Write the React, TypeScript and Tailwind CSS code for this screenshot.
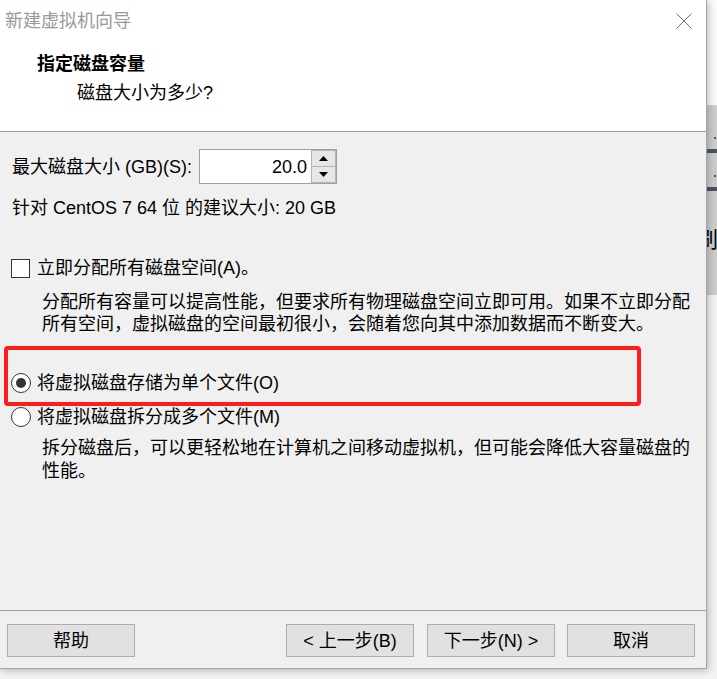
import React from "react";

function Btn({ children, className = "" }: { children: React.ReactNode; className?: string }) {
  return (
    <div
      className={
        "w-[128px] h-[33px] flex items-center justify-center bg-[#e1e1e1] border border-[#adadad] text-[18px] leading-[24px] text-black whitespace-nowrap " +
        className
      }
    >
      {children}
    </div>
  );
}

export default function App() {
  return (
    <div className="w-[717px] h-[679px] flex overflow-hidden bg-[#f4f4f4] font-[family-name:'Liberation_Sans','Noto_Sans_CJK_SC',sans-serif] text-black">
      <div className="w-[707px] flex flex-col shrink-0">
        <div className="relative z-10 h-[669px] flex flex-col bg-[#f0f0f0] border-r border-b border-[#a6a6a6] shadow-[1px_1px_8px_rgba(0,0,0,0.28)]">
          {/* header */}
          <div className="h-[132px] shrink-0 bg-white border-b border-[#a0a0a0] flex flex-col">
            <div className="h-[42px] flex items-center justify-between pl-[5px] pr-[14px]">
              <span className="text-[18px] leading-[24px] text-[#999999]">新建虚拟机向导</span>
              <svg width="16" height="16" viewBox="0 0 16 16" fill="none">
                <path d="M0.5 0.5L15.5 15.5M15.5 0.5L0.5 15.5" stroke="#6b6b6b" strokeWidth="1" />
              </svg>
            </div>
            <div className="pl-[37px] mt-[10px] text-[18px] leading-[24px] font-bold">指定磁盘容量</div>
            <div className="pl-[77px] mt-[5px] text-[18px] leading-[24px]">磁盘大小为多少?</div>
          </div>

          {/* body */}
          <div className="flex-1 flex flex-col text-[18px] leading-[24px]">
            <div className="mt-[17px] h-[35px] flex items-center pl-[12px]">
              <span className="w-[187px] whitespace-nowrap">最大磁盘大小 (GB)(S):</span>
              <div className="flex h-[35px] w-[138px] border border-[#a0a0a0] bg-white">
                <div className="flex-1 flex items-center justify-end pr-[4px]">20.0</div>
                <div className="w-[25px] flex flex-col">
                  <div className="h-[17px] flex items-center justify-center bg-[#e6e6e6] border border-[#b4b4b4]">
                    <svg width="9" height="5" viewBox="0 0 9 5">
                      <path d="M4.5 0L9 5H0Z" fill="#000" />
                    </svg>
                  </div>
                  <div className="flex-1 flex items-center justify-center bg-[#e6e6e6] border border-t-0 border-[#b4b4b4]">
                    <svg width="9" height="5" viewBox="0 0 9 5">
                      <path d="M0 0H9L4.5 5Z" fill="#000" />
                    </svg>
                  </div>
                </div>
              </div>
            </div>

            <div className="mt-[12px] pl-[12px] whitespace-nowrap">针对 CentOS 7 64 位 的建议大小: 20 GB</div>

            <div className="mt-[36px] h-[24px] flex items-center pl-[11px] gap-[7px]">
              <div className="w-[19px] h-[19px] bg-white border border-[#333333]" />
              <span className="whitespace-nowrap">立即分配所有磁盘空间(A)。</span>
            </div>

            <div className="mt-[11px] pl-[42px] leading-[22px] whitespace-nowrap">
              分配所有容量可以提高性能，但要求所有物理磁盘空间立即可用。如果不立即分配
              <br />
              所有空间，虚拟磁盘的空间最初很小，会随着您向其中添加数据而不断变大。
            </div>

            <div className="mt-[36px] h-[24px] flex items-center pl-[11px] gap-[6px]">
              <div className="w-[20px] h-[20px] rounded-full bg-white border border-[#333333] flex items-center justify-center">
                <div className="w-[10px] h-[10px] rounded-full bg-[#333333]" />
              </div>
              <span className="whitespace-nowrap">将虚拟磁盘存储为单个文件(O)</span>
            </div>

            <div className="mt-[10px] h-[24px] flex items-center pl-[11px] gap-[6px]">
              <div className="w-[20px] h-[20px] rounded-full bg-white border border-[#333333]" />
              <span className="whitespace-nowrap">将虚拟磁盘拆分成多个文件(M)</span>
            </div>

            <div className="mt-[8px] pl-[42px] leading-[23px] whitespace-nowrap">
              拆分磁盘后，可以更轻松地在计算机之间移动虚拟机，但可能会降低大容量磁盘的
              <br />
              性能。
            </div>
          </div>

          {/* footer */}
          <div className="h-[58px] shrink-0 border-t border-[#a0a0a0] flex pt-[13px] pl-[7px] pr-[11px]">
            <Btn>帮助</Btn>
            <div className="flex-1" />
            <Btn>&lt; 上一步(B)</Btn>
            <Btn className="ml-[13px]">下一步(N) &gt;</Btn>
            <Btn className="ml-[12px]">取消</Btn>
          </div>

          {/* red annotation */}
          <div className="absolute left-[4px] top-[346px] w-[637px] h-[60px] border-[4px] border-[#ff1c1c] rounded-[4px] pointer-events-none" />
        </div>
        <div className="flex-1 bg-[#f3f3f3]" />
      </div>

      {/* background window strip */}
      <div className="flex-1 flex flex-col">
        <div className="h-[105px] bg-[#fbfbfb]" />
        <div className="h-[190px] bg-[#cdcdcd] flex flex-col overflow-hidden">
          <div className="mt-[32px] ml-[7px] w-[2px] h-[2px] bg-[#555]" />
          <div className="mt-[10px] h-[4px] bg-[#4a5561]" />
          <div className="mt-[22px] ml-[7px] w-[2px] h-[2px] bg-[#555]" />
          <div className="mt-[10px] h-[4px] bg-[#4a5561]" />
          <div className="mt-[36px] -ml-[11px] text-[22px] leading-[26px] text-black whitespace-nowrap">刷</div>
        </div>
        <div className="flex-1 bg-[#f3f3f3]" />
      </div>
    </div>
  );
}
